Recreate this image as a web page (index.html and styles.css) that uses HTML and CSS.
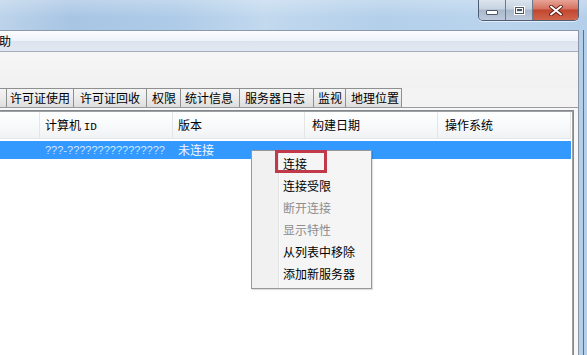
FILE: index.html
```html
<!DOCTYPE html>
<html lang="zh-CN">
<head>
    <meta charset="UTF-8">
    <title>服务器列表</title>
    <link rel="stylesheet" href="styles.css">
</head>
<body>
    <div class="window">
        <div class="titlebar">
            <div class="caption">
                <span class="cap-btn cap-min"><i></i></span>
                <span class="cap-btn cap-max"><i></i></span>
                <span class="cap-btn cap-close">
                    <svg width="14" height="11" viewBox="0 0 14 11">
                        <path d="M2 1.5 L12 9.5 M12 1.5 L2 9.5" stroke="#5a1a12" stroke-width="3.6" stroke-linecap="round"/>
                        <path d="M2 1.5 L12 9.5 M12 1.5 L2 9.5" stroke="#ffffff" stroke-width="2" stroke-linecap="round"/>
                    </svg>
                </span>
            </div>
        </div>

        <div class="frame">
            <div class="client">
                <div class="menubar"><span class="menu-item">助</span></div>
                <div class="toolbar-area"></div>

                <div class="tabs">
                    <span class="tab tab-cut"></span>
                    <span class="tab">许可证使用</span>
                    <span class="tab">许可证回收</span>
                    <span class="tab">权限</span>
                    <span class="tab">统计信息</span>
                    <span class="tab">服务器日志</span>
                    <span class="tab">监视</span>
                    <span class="tab">地理位置</span>
                </div>

                <div class="panel">
                    <div class="listview">
                        <div class="lv-head">
                            <span class="col col-first"></span>
                            <span class="col col-id">计算机 <b class="latin">ID</b></span>
                            <span class="col col-ver">版本</span>
                            <span class="col col-date">构建日期</span>
                            <span class="col col-os">操作系统</span>
                        </div>
                        <div class="lv-row selected">
                            <span class="col col-first"></span>
                            <span class="col col-id qmarks">???-????????????????</span>
                            <span class="col col-ver">未连接</span>
                            <span class="col col-date"></span>
                            <span class="col col-os"></span>
                        </div>
                    </div>
                </div>
            </div>
        </div>

        <ul class="context-menu">
            <li class="cm-item">连接</li>
            <li class="cm-item">连接受限</li>
            <li class="cm-item disabled">断开连接</li>
            <li class="cm-item disabled">显示特性</li>
            <li class="cm-item">从列表中移除</li>
            <li class="cm-item">添加新服务器</li>
        </ul>
        <div class="highlight-box"></div>
    </div>
</body>
</html>
```

FILE: styles.css
```css
body {
    margin: 0;
    background-color: #ffffff;
    font-family: "Noto Sans CJK SC", "Noto Sans", sans-serif;
    font-size: 12px;
    overflow: hidden;
}

.window {
    position: relative;
    width: 587px;
    height: 355px;
    overflow: hidden;
    background: linear-gradient(90deg, #bcd3ea 0%, #a8c5e4 12%, #aecbe8 30%, #c2d9ee 45%, #b3cfea 65%, #bad4ed 85%, #b4cfe9 100%);
}

.titlebar {
    height: 30px;
    display: flex;
    justify-content: flex-end;
    padding-right: 8px;
    background: linear-gradient(180deg, rgba(255, 255, 255, 0.25) 0%, rgba(255, 255, 255, 0) 60%);
}

.caption {
    display: flex;
    height: 20px;
    border: 1px solid #4d5d73;
    border-top: none;
    border-radius: 0 0 5px 5px;
    overflow: hidden;
    box-shadow: 0 1px 0 rgba(255, 255, 255, 0.6);
}

.cap-btn {
    display: flex;
    align-items: center;
    justify-content: center;
    height: 20px;
    background: linear-gradient(180deg, #dbe4ee 0%, #c7d3e1 45%, #a9b8ca 50%, #bccadb 100%);
    border-left: 1px solid #6b7a8e;
}

.cap-min {
    width: 26px;
    border-left: none;
}

.cap-max {
    width: 26px;
}

.cap-close {
    width: 45px;
    background: linear-gradient(180deg, #e6a496 0%, #d5715e 45%, #c24630 50%, #d0654b 100%);
}

.cap-min i {
    display: block;
    width: 10px;
    height: 3px;
    margin-top: 5px;
    background: #ffffff;
    border: 1px solid #4c5666;
    border-radius: 1px;
}

.cap-max i {
    display: block;
    width: 7px;
    height: 5px;
    border: 1px solid #4c5666;
    outline: 1px solid #ffffff;
    background: #dfe6ee;
    box-shadow: inset 0 0 0 1px #ffffff, inset 0 2px 0 1px #4c5666;
}

.frame {
    height: 325px;
    padding-right: 4px;
    border-right: 1px solid #5f6f84;
    margin-right: 3px;
}

.client {
    height: 100%;
    width: 579px;
    border-right: 1px solid #8b97a6;
    box-sizing: border-box;
    background-color: #f3f3f3;
}

.menubar {
    height: 20px;
    border-top: 1px solid #8c99ab;
    border-bottom: 1px solid #a3adbb;
    background: linear-gradient(180deg, #fbfcfe 0%, #eef2f9 50%, #dde4ef 51%, #e2e8f2 100%);
    display: flex;
    align-items: center;
}

.menu-item {
    margin-left: -1px;
    line-height: 20px;
    color: #000000;
}

.toolbar-area {
    height: 36px;
    background: linear-gradient(180deg, #f6f6f6 0%, #f1f1f1 100%);
}

.tabs {
    display: flex;
    height: 19px;
    align-items: stretch;
}

.tab {
    flex: none;
    box-sizing: border-box;
    line-height: 17px;
    border: 1px solid #8e8f8f;
    border-bottom: none;
    border-right: none;
    padding-left: 3px;
    background: linear-gradient(180deg, #f5f5f5 0%, #ebebeb 50%, #dedede 100%);
    color: #000000;
    white-space: nowrap;
}

.tab:last-child {
    border-right: 1px solid #8e8f8f;
}

.tab-cut { width: 6px; border-left: none; }
.tab:nth-child(2) { width: 67px; }
.tab:nth-child(3) { width: 73px; padding-left: 6px; }
.tab:nth-child(4) { width: 34px; padding-left: 5px; }
.tab:nth-child(5) { width: 59px; padding-left: 4px; }
.tab:nth-child(6) { width: 74px; padding-left: 5px; }
.tab:nth-child(7) { width: 32px; padding-left: 4px; }
.tab:nth-child(8) { width: 57px; padding-left: 5px; }

.panel {
    height: 260px;
    border-top: 1px solid #9a9a9a;
    padding: 2px 2px 0 0;
    background-color: #f7f7f7;
}

.listview {
    height: 100%;
    width: 574px;
    border-top: 1px solid #828790;
    border-right: 1px solid #828790;
    box-shadow: inset 0 1px 0 #a0a0a0, inset -1px 0 0 #a0a0a0;
    background-color: #ffffff;
    box-sizing: border-box;
    padding: 1px 2px 0 0;
}

.lv-head {
    display: flex;
    height: 26px;
    align-items: center;
    background: linear-gradient(180deg, #ffffff 0%, #f7f8fa 60%, #f1f2f4 100%);
    border-bottom: 1px solid #e3e6ea;
}

.lv-head .col {
    height: 100%;
    line-height: 26px;
    border-right: 1px solid #e5e5e5;
}

.col {
    flex: none;
    box-sizing: border-box;
    padding-left: 5px;
    white-space: nowrap;
    overflow: hidden;
}

.col-first { width: 40px; }
.col-id { width: 133px; }
.col-ver { width: 132px; }
.col-date { width: 133px; padding-left: 7px; }
.col-os { flex: 1; padding-left: 7px; }

.latin {
    font-family: "Liberation Mono", monospace;
    font-weight: normal;
    font-size: 11px;
}

.lv-row {
    display: flex;
    height: 18px;
    margin-top: 2px;
    line-height: 18px;
}

.lv-row.selected {
    background-color: #3399ff;
    color: #f2f8ff;
}

.qmarks {
    font-family: "Liberation Sans", Arial, sans-serif;
    font-size: 11px;
    color: #cfe6ff;
}

.context-menu {
    position: absolute;
    left: 251px;
    top: 150px;
    width: 121px;
    margin: 0;
    padding: 2px 0 3px 0;
    list-style: none;
    box-sizing: border-box;
    border: 1px solid #979797;
    background: linear-gradient(90deg, #f1f1f1 0px, #f1f1f1 26px, #e2e3e3 26px, #e2e3e3 27px, #ffffff 27px, #f5f5f5 28px, #f5f5f5 100%);
    box-shadow: 1px 1px 1px rgba(0, 0, 0, 0.12);
}

.cm-item {
    height: 22px;
    line-height: 22px;
    padding-left: 31px;
    color: #000000;
}

.cm-item.disabled {
    color: #8d8d8d;
}

.highlight-box {
    position: absolute;
    left: 275px;
    top: 150px;
    width: 52px;
    height: 23px;
    box-sizing: border-box;
    border: 3px solid #c23a4a;
}
```
